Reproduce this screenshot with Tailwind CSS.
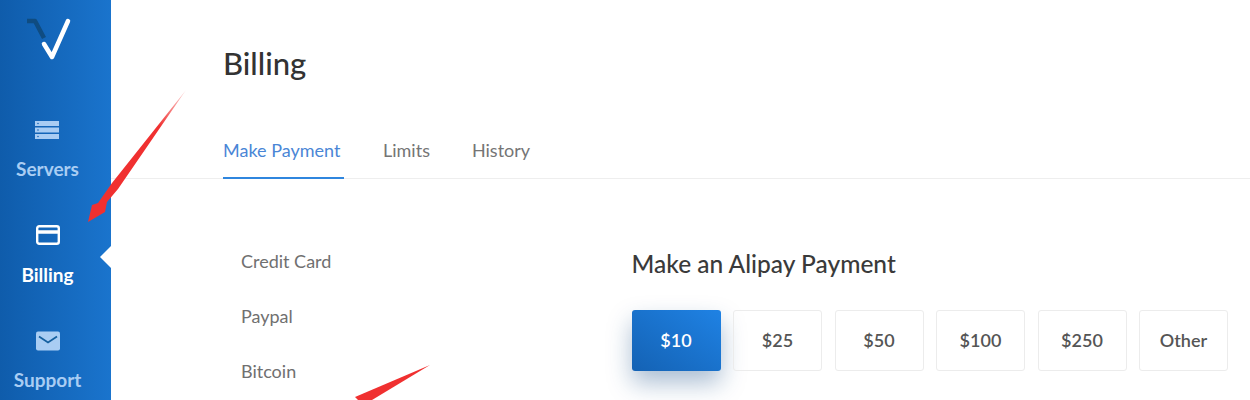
<!DOCTYPE html>
<html lang="en">
<head>
    <meta charset="UTF-8">
    <title>Billing</title>
    <script src="https://cdn.jsdelivr.net/npm/@tailwindcss/browser@4"></script>
</head>
<body class="bg-white">
    <div class="relative flex h-[400px] w-[1250px] overflow-hidden font-['Lato',sans-serif]">
        <!-- Sidebar -->
        <aside class="relative flex h-full w-[111px] shrink-0 flex-col items-center bg-gradient-to-r from-[#0f5cab] to-[#1a74cd] pr-[16px]">
            <svg class="mt-[15px] h-[46px] w-[46px]" viewBox="0 0 46 46" fill="none" stroke-width="4.500" stroke-linecap="round" stroke-linejoin="round">
                <path d="M2 6 H10 L19 23" stroke="#0f4c81" stroke-linecap="butt"/>
                <path d="M19 29 L27 42 L43 6" stroke="#fff"/>
            </svg>
            <a class="mt-[57px] flex flex-col items-center text-[#a9cdf3]">
                <svg class="h-[24px] w-[24px]" viewBox="0 0 24 24" fill="currentColor">
                    <path fill-rule="evenodd" d="M0 3h24v5H0zM3 4.700a.8.800 0 1 0 0 1.600.8.800 0 0 0 0-1.600zM0 9.500h24v5H0zM3 11.200a.8.800 0 1 0 0 1.600.8.800 0 0 0 0-1.600zM0 16h24v5H0zM3 17.700a.8.800 0 1 0 0 1.600.8.800 0 0 0 0-1.600z"/>
                </svg>
                <span class="mt-[16px] text-[19px] leading-[22px] font-bold">Servers</span>
            </a>
            <a class="mt-[43px] flex flex-col items-center text-white">
                <svg class="h-[24px] w-[24px]" viewBox="0 0 24 24" fill="none" stroke="currentColor" stroke-width="2.400">
                    <rect x="1.200" y="3.200" width="21.600" height="17.600" rx="2"/>
                    <path d="M1 9h22" stroke-width="3.500"/>
                </svg>
                <span class="mt-[17px] text-[19px] leading-[22px] font-bold">Billing</span>
            </a>
            <a class="mt-[43px] flex flex-col items-center text-[#a9cdf3]">
                <svg class="h-[24px] w-[24px]" viewBox="0 0 24 24">
                    <rect x="0" y="2.500" width="24" height="19" rx="2" fill="currentColor"/>
                    <path d="M3 7.500l9 6 9-6" fill="none" stroke="#15609f" stroke-width="1.800"/>
                </svg>
                <span class="mt-[16px] text-[19px] leading-[22px] font-bold">Support</span>
            </a>
            <!-- active notch -->
            <div class="absolute right-0 top-[246px] h-0 w-0 border-y-[11px] border-r-[11px] border-y-transparent border-r-white"></div>
        </aside>

        <!-- Main -->
        <main class="flex-1">
            <div class="border-b border-[#eeeeee] pl-[112px]">
                <h1 class="pt-[44px] text-[31px] leading-[38px] font-medium text-[#333333]">Billing</h1>
                <nav class="mt-[56px] flex gap-[39px] text-[18px] leading-[24px] whitespace-nowrap text-[#757575]">
                    <a class="-mb-px w-[121px] border-b-2 border-[#2f86de] pb-[15px] text-[#4a86d6]">Make Payment</a>
                    <a class="mr-[3px]">Limits</a>
                    <a>History</a>
                </nav>
            </div>
            <div class="flex pl-[130px]">
                <ul class="flex w-[390.500px] flex-col gap-[31px] pt-[70px] text-[18px] leading-[24px] text-[#707070]">
                    <li>Credit Card</li>
                    <li>Paypal</li>
                    <li>Bitcoin</li>
                </ul>
                <section class="pt-[70px]">
                    <h2 class="text-[24.500px] leading-[30px] font-medium whitespace-nowrap text-[#3a3a3a]">Make an Alipay Payment</h2>
                    <div class="mt-[31px] flex gap-[12.500px] text-[18px] font-semibold text-[#555555]">
                        <button class="h-[61px] w-[89px] rounded-[3px] bg-gradient-to-tr from-[#1462b4] to-[#1f82e4] text-white shadow-[0_12px_24px_rgba(15,70,130,0.35)]">$10</button>
                        <button class="h-[61px] w-[89px] rounded-[3px] border border-[#ececec]">$25</button>
                        <button class="h-[61px] w-[89px] rounded-[3px] border border-[#ececec]">$50</button>
                        <button class="h-[61px] w-[89px] rounded-[3px] border border-[#ececec]">$100</button>
                        <button class="h-[61px] w-[89px] rounded-[3px] border border-[#ececec]">$250</button>
                        <button class="h-[61px] w-[89px] rounded-[3px] border border-[#ececec]">Other</button>
                    </div>
                </section>
            </div>
        </main>

        <!-- red annotation arrows drawn over the shot -->
        <svg class="pointer-events-none absolute inset-0" width="1250" height="400" viewBox="0 0 1250 400">
            <defs>
                <linearGradient id="tail1" x1="186" y1="90" x2="110" y2="195" gradientUnits="userSpaceOnUse">
                    <stop offset="0" stop-color="#f23a3a" stop-opacity=".2"/>
                    <stop offset=".35" stop-color="#f03030"/>
                </linearGradient>
            </defs>
            <path d="M186 90 L118 189 L107 202 L105 212 L88 222 L92 205 L98 203 L112 183 Z" fill="url(#tail1)"/>
            <path d="M430 365 L355 397 L358 400 L372 400 Z" fill="#f03030"/>
        </svg>
    </div>
</body>
</html>
